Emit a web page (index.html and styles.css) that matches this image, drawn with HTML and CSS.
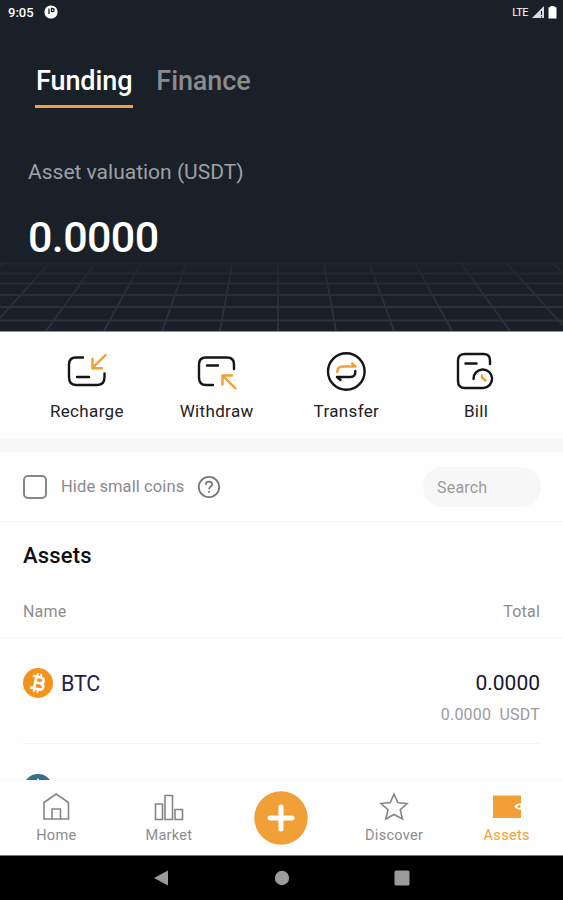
FILE: index.html
```html
<!DOCTYPE html>
<html lang="en">
<head>
  <meta charset="UTF-8">
  <meta name="viewport" content="width=device-width, initial-scale=1">
  <title>Assets</title>
  <link rel="stylesheet" href="styles.css">
</head>

<body>
  <div class="app">
    <!-- HEADER -->
    <header class="header">
      <svg class="floor" viewBox="0 0 563 81" width="563" height="81">
        <defs>
          <linearGradient id="fade" x1="0" y1="0" x2="0" y2="1">
            <stop offset="0" stop-color="#fff" stop-opacity="0.1"/>
            <stop offset="0.5" stop-color="#fff" stop-opacity="0.75"/>
            <stop offset="1" stop-color="#fff"/>
          </linearGradient>
          <mask id="floor-mask"><rect width="563" height="81" fill="url(#fade)"/></mask>
        </defs>
        <g mask="url(#floor-mask)" fill="none" stroke="#2a373e" stroke-width="1.7">
          <path d="M0 13.500H563M0 23.500H563M0 33.500H563M0 45H563M0 57H563M0 70.500H563" stroke-width="2"/>
          <path d="M278 81V12M220 81L232.500 12M162 81L187 12M104 81L141.500 12M46 81L96 12M-12 81L50.500 12M-70 81L5 12M-128 81L-40 12"/>
          <path d="M336 81L323.500 12M394 81L369 12M452 81L414.500 12M510 81L460 12M568 81L505.500 12M626 81L551 12M684 81L596 12"/>
        </g>
      </svg>

      <div class="status-bar">
        <div class="status-left">
          <span class="clock">9:05</span>
          <svg width="14" height="14" viewBox="0 0 14 14">
            <circle cx="7" cy="7" r="6.600" fill="#fff"/>
            <path d="M5 3.500v5.500M7.500 3.500h1a1.600 1.600 0 0 1 0 3.200h-1z" fill="none" stroke="#1a2129" stroke-width="1.300"/>
          </svg>
        </div>
        <div class="status-right">
          <span class="network">LTE</span>
          <svg width="14" height="13" viewBox="0 0 14 13">
            <path d="M13 0v12H1z" fill="#d9dbdd"/>
            <path d="M10.500 5v4M10.500 10.200v1.300" stroke="#1a2129" stroke-width="1.100"/>
          </svg>
          <svg width="9" height="13" viewBox="0 0 9 13">
            <path d="M2.500 0h4v1.300H8.500V12.500H0.500V1.300h2z" fill="#fff"/>
          </svg>
        </div>
      </div>

      <nav class="tabs">
        <a class="tab active">Funding</a>
        <a class="tab">Finance</a>
      </nav>

      <div class="valuation-label">Asset valuation (USDT)</div>
      <div class="valuation">0.0000</div>
    </header>

    <!-- ACTIONS -->
    <section class="actions">
      <div class="action">
        <svg width="42" height="40" viewBox="0 0 42 40" class="action-icon">
          <path d="M17 6.500H10Q3 6.500 3 13.500V26Q3 34 10 34H31.500Q38.500 34 38.500 26V22.500M11 26H23"/>
          <path class="accent" d="M39.500 4L26.500 17M26.500 8V17.300H36"/>
        </svg>
        <span>Recharge</span>
      </div>
      <div class="action">
        <svg width="42" height="40" viewBox="0 0 42 40" class="action-icon">
          <path d="M17 34H10Q3 34 3 26.500V13.500Q3 6.500 10 6.500H31Q38 6.500 38 13.500V18M11 14.500H22"/>
          <path class="accent" d="M39.500 37.500L26.500 24.500M26.500 33.500V24.500H36"/>
        </svg>
        <span>Withdraw</span>
      </div>
      <div class="action">
        <svg width="42" height="40" viewBox="0 0 42 40" class="action-icon">
          <circle cx="21.300" cy="20.500" r="18.300"/>
          <path d="M30.300 20Q30.800 26 25.300 26H12L15.500 29"/>
          <path class="accent" d="M12.300 21Q12.300 15.500 17.800 15.500H30.500L27 12.500"/>
        </svg>
        <span>Transfer</span>
      </div>
      <div class="action">
        <svg width="42" height="40" viewBox="0 0 42 40" class="action-icon">
          <path d="M35 13V9.500Q35 3 28.500 3H10Q3 3 3 9.500V30Q3 37 10 37H28.500A9.300 9.300 0 1 0 18.500 28M10.500 12.500H21.500"/>
          <path class="accent" d="M27 24.500V26.500L30.500 29.500"/>
        </svg>
        <span>Bill</span>
      </div>
    </section>

    <!-- FILTER -->
    <section class="filter">
      <span class="checkbox"></span>
      <span class="filter-label">Hide small coins</span>
      <svg class="help" width="24" height="24" viewBox="0 0 24 24">
        <circle cx="12" cy="12" r="10.200"/>
        <path d="M8.800 9.700Q8.800 6.700 12 6.700T15.200 9.500C15.200 11.500 12 11.700 12 14.200M12 16V17.700"/>
      </svg>
      <span class="search">Search</span>
    </section>

    <!-- ASSET LIST -->
    <section class="assets">
      <h2 class="assets-title">Assets</h2>
      <div class="list-head">
        <span>Name</span>
        <span>Total</span>
      </div>
      <div class="coin">
        <div class="coin-name">
          <svg width="30" height="30" viewBox="0 0 30 30">
            <circle cx="15" cy="15" r="15" fill="#f4931c"/>
            <g transform="rotate(13 15 15)" fill="none" stroke="#fff">
              <path d="M12.200 9V21M8.500 9H16.500Q20 9.200 20 11.900T16.500 14.900H12.200M16.500 14.900Q21 15 21 18T17 21H8.500" stroke-width="2.700"/>
              <path d="M12.800 5.500V9M16.500 5.500V9M12.800 21V24.500M16.500 21V24.500" stroke-width="1.900"/>
            </g>
          </svg>
          <span>BTC</span>
        </div>
        <div class="coin-total">
          <div class="amount">0.0000</div>
          <div class="value">0.0000&nbsp; USDT</div>
        </div>
      </div>
      <div class="coin next">
        <svg width="30" height="30" viewBox="0 0 30 30">
          <circle cx="15" cy="15" r="15" fill="#356f8b"/>
          <path d="M15 4L24 18L15 24L6 18Z" fill="#e4edf1"/>
        </svg>
      </div>
    </section>

    <!-- TAB BAR -->
    <nav class="tab-bar">
      <a class="bar-item">
        <svg class="bar-icon" width="30" height="30" viewBox="0 0 30 30">
          <path d="M3 11.500L15.200 3L27.500 11.500V28H3ZM11 28V18H19.500V28"/>
        </svg>
        <span>Home</span>
      </a>
      <a class="bar-item">
        <svg class="bar-icon" width="30" height="30" viewBox="0 0 30 30">
          <path d="M1.500 13H8.500V28.500H1.500ZM11 4.500H18.500V28.500H11ZM21 18.500H28.500V28.500H21Z"/>
        </svg>
        <span>Market</span>
      </a>
      <a class="bar-item">
        <svg class="plus" width="54" height="54" viewBox="0 0 54 54">
          <circle cx="27" cy="27" r="26.700" fill="#f0a037"/>
          <path d="M27 16V38M16 27H38" stroke="#fff" stroke-width="5" stroke-linecap="round"/>
        </svg>
      </a>
      <a class="bar-item">
        <svg class="bar-icon" width="30" height="30" viewBox="0 0 30 30">
          <path d="M15 3L18.800 11.500L28 12.500L21.200 18.700L23.500 28L15 23.500L6.800 28L9 18.700L2 12.500L11.300 11.500Z"/>
        </svg>
        <span>Discover</span>
      </a>
      <a class="bar-item active">
        <svg width="30" height="30" viewBox="0 0 30 30">
          <path d="M1 4.500H29V12.200Q24 12.700 22.500 15.500Q24 18.500 29 18.900V27H1Z" fill="#f0a037"/>
          <circle cx="27" cy="15.500" r="1.500" fill="#f0a037"/>
        </svg>
        <span>Assets</span>
      </a>
    </nav>

    <!-- SYSTEM NAVIGATION -->
    <div class="system-nav">
      <svg width="16" height="16" viewBox="0 0 16 16"><path d="M0 8L14 0.500V15.500Z"/></svg>
      <svg width="16" height="16" viewBox="0 0 16 16"><circle cx="8" cy="8" r="7.200"/></svg>
      <svg width="16" height="16" viewBox="0 0 16 16"><rect x="0.500" y="0.500" width="15" height="15" rx="1.500"/></svg>
    </div>
  </div>
</body>
</html>
```
FILE: styles.css
```css
/* ===============================
   BASE
=============================== */
* {
  box-sizing: border-box;
}
body {
  margin: 0;
  font-family: Roboto, sans-serif;
  background: #fefefe;
}
svg {
  display: block;
  flex: none;
}
.app {
  display: flex;
  flex-direction: column;
  width: 563px;
  height: 900px;
  overflow: hidden;
}

/* ===============================
   HEADER
=============================== */
.header {
  position: relative;
  flex: none;
  height: 332px;
  background: #192028;
  border-bottom: 1px solid #8b8f92;
  color: #fff;
}
.floor {
  position: absolute;
  left: 0;
  bottom: 0;
}
.status-bar {
  display: flex;
  justify-content: space-between;
  height: 24px;
  padding: 0 6px 0 8px;
}
.status-left,
.status-right {
  display: flex;
  align-items: center;
}
.status-left {
  gap: 10px;
}
.status-right {
  gap: 3px;
}
.clock {
  font-size: 13px;
  font-weight: 500;
}
.network {
  font-size: 11px;
  letter-spacing: -0.5px;
}
.tabs {
  display: flex;
  gap: 22px;
  padding: 38px 0 0 35px;
}
.tab {
  height: 46px;
  padding: 0 1px;
  font-size: 27px;
  font-weight: 500;
  line-height: 39px;
  letter-spacing: -0.1px;
  color: #8a8b8d;
}
.tab.active {
  color: #fff;
  border-bottom: 3px solid #eda03e;
}
.valuation-label {
  margin: 50px 0 0 28px;
  font-size: 21px;
  line-height: 28px;
  color: #9da1a5;
}
.valuation {
  margin: 24px 0 0 28px;
  font-size: 43px;
  font-weight: 500;
  line-height: 54px;
  letter-spacing: -0.6px;
}

/* ===============================
   ACTIONS
=============================== */
.actions {
  display: grid;
  grid-template-columns: repeat(4, 1fr);
  flex: none;
  height: 120px;
  padding: 19px 22px 0;
  border-bottom: 14px solid #f7f7f7;
}
.action {
  display: flex;
  flex-direction: column;
  align-items: center;
  gap: 9px;
  font-size: 17px;
  line-height: 22px;
  letter-spacing: 0.35px;
  color: #222;
}
.action-icon {
  fill: none;
  stroke: #151515;
  stroke-width: 2.4;
  stroke-linecap: round;
  stroke-linejoin: round;
}
.action-icon .accent {
  stroke: #f0a037;
}

/* ===============================
   FILTER
=============================== */
.filter {
  display: flex;
  align-items: center;
  flex: none;
  height: 70px;
  padding: 0 22px 0 23px;
  border-bottom: 1px solid #f7f7f7;
  color: #8a8a8e;
  font-size: 16.5px;
}
.checkbox {
  width: 24px;
  height: 24px;
  border: 2px solid #85858b;
  border-radius: 5px;
}
.filter-label {
  margin-left: 14px;
  line-height: 22px;
  letter-spacing: 0.1px;
}
.help {
  margin-left: 13px;
  fill: none;
  stroke: #77777c;
  stroke-width: 1.8;
}
.search {
  width: 118px;
  height: 40px;
  margin-left: auto;
  padding-left: 14px;
  border-radius: 20px;
  background: #f7f7f7;
  font-size: 16px;
  line-height: 41px;
  letter-spacing: 0.2px;
  color: #9a9a9a;
}

/* ===============================
   ASSET LIST
=============================== */
.assets {
  flex: 1;
  min-height: 0;
  overflow: hidden;
}
.assets-title {
  margin: 20px 23px 0;
  font-size: 22px;
  font-weight: 500;
  line-height: 28px;
  letter-spacing: 0.2px;
  color: #111;
}
.list-head {
  display: flex;
  justify-content: space-between;
  height: 68px;
  padding: 32px 23px 0;
  border-bottom: 1px solid #f5f5f5;
  font-size: 16px;
  line-height: 20px;
  letter-spacing: 0.2px;
  color: #8d8d91;
}
.coin {
  display: flex;
  justify-content: space-between;
  height: 106px;
  margin: 0 23px;
  padding-top: 30px;
  border-bottom: 1px solid #f3f3f3;
}
.coin-name {
  display: flex;
  align-items: center;
  gap: 8px;
  height: 30px;
  font-size: 21.5px;
  letter-spacing: -0.2px;
  color: #22204f;
}
.coin-total {
  text-align: right;
}
.amount {
  font-size: 21px;
  line-height: 30px;
  color: #17152f;
}
.value {
  margin-top: 7px;
  font-size: 16px;
  line-height: 20px;
  letter-spacing: 0.2px;
  color: #9b9b9f;
}

/* ===============================
   TAB BAR
=============================== */
.tab-bar {
  display: grid;
  grid-template-columns: repeat(5, 1fr);
  flex: none;
  height: 76px;
  border-top: 1px solid #fafafa;
  border-bottom: 1px solid #777;
  background: #fefefe;
}
.bar-item {
  display: flex;
  flex-direction: column;
  align-items: center;
  padding-top: 10px;
  font-size: 14.5px;
  line-height: 30px;
  letter-spacing: 0.3px;
  color: #8c8c8c;
}
.bar-item.active {
  color: #f0a037;
}
.bar-icon {
  fill: none;
  stroke: #858585;
  stroke-width: 1.6;
}

/* ===============================
   SYSTEM NAVIGATION
=============================== */
.system-nav {
  display: flex;
  justify-content: center;
  align-items: center;
  gap: 104px;
  flex: none;
  height: 44px;
  background: #000;
  fill: #9b9b9b;
}
```
